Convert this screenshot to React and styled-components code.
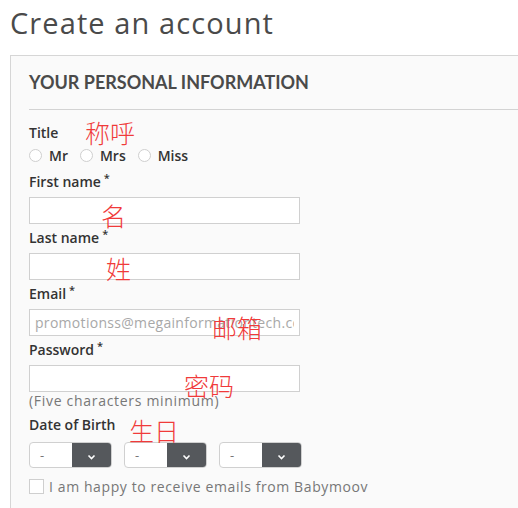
import React from "react";
import styled, { createGlobalStyle } from "styled-components";

const GlobalStyle = createGlobalStyle`
  html, body { margin: 0; padding: 0; background: #fff; overflow: hidden; }
  body { font-family: "Open Sans", "Noto Sans", sans-serif; color: #333; }
`;

const Page = styled.div`
  width: 518px;
  height: 508px;
  padding-left: 10px;
  box-sizing: border-box;
`;

const Heading = styled.h1`
  margin: 0;
  padding-top: 3px;
  height: 55px;
  box-sizing: border-box;
  font-family: "Open Sans", sans-serif;
  font-weight: 400;
  font-size: 29px;
  line-height: 40px;
  color: #4a4a4a;
  letter-spacing: 1.1px;
`;

const Panel = styled.section`
  position: relative;
  width: 560px;
  height: 470px;
  border: 1px solid #d6d6d6;
  background: #fafafa;
  padding: 0 0 0 18px;
  box-sizing: border-box;
`;

const PanelHead = styled.h2`
  margin: 0;
  padding: 16px 0 16px;
  border-bottom: 1px solid #d3d3d3;
  font-family: Lato, sans-serif;
  font-weight: 700;
  font-size: 18px;
  line-height: 21px;
  color: #4a4a4a;
`;

const Form = styled.div`
  display: flex;
  flex-direction: column;
  align-items: flex-start;
  padding-top: 13px;
`;

const Label = styled.label`
  margin-top: ${(p) => p.$top || 0}px;
  font-family: "Open Sans", sans-serif;
  font-weight: 600;
  font-size: 14px;
  line-height: 20px;
  color: #333;
  sup {
    font-size: 11px;
    margin-left: 3px;
    vertical-align: 5px;
    line-height: 0;
  }
`;

const Input = styled.input`
  width: 271px;
  height: 27px;
  box-sizing: border-box;
  margin: 5px 0 4px;
  border: 1px solid #d0d0d0;
  background: #fff;
  padding: 0 5px;
  font-family: "Open Sans", sans-serif;
  font-size: 14px;
  letter-spacing: 0.3px;
  color: #999;
  outline: none;
  &::placeholder { color: #a8a8a8; }
`;

const RadioRow = styled.div`
  display: flex;
  align-items: center;
  height: 20px;
  margin: 2px 0 7px;
`;

const RadioOption = styled.label`
  display: flex;
  align-items: center;
  gap: 7px;
  margin-right: ${(p) => p.$gap}px;
  font-family: "Open Sans", sans-serif;
  font-weight: 600;
  font-size: 14px;
  color: #333;
`;

const Circle = styled.span`
  width: 11px;
  height: 11px;
  border: 1px solid #cfcfcf;
  border-radius: 50%;
  background: #fff;
`;

const Hint = styled.div`
  margin-top: -5px;
  font-size: 14px;
  line-height: 20px;
  color: #777;
  letter-spacing: 0.7px;
`;

const Note = styled.span`
  position: absolute;
  left: ${(p) => p.$x}px;
  top: ${(p) => p.$y}px;
  font-family: "Noto Sans CJK SC", sans-serif;
  font-weight: 300;
  font-size: 25px;
  line-height: 1;
  color: #f03a3a;
  pointer-events: none;
  white-space: nowrap;
`;

const SelectRow = styled.div`
  display: flex;
  gap: 12px;
  margin-top: 7px;
`;

const Select = styled.div`
  display: flex;
  width: 83px;
  height: 26px;
  box-sizing: border-box;
  border: 1px solid #d0d0d0;
  border-radius: 4px;
  overflow: hidden;
  background: #fff;
`;

const SelectValue = styled.span`
  flex: 0 0 42px;
  padding-left: 10px;
  box-sizing: border-box;
  font-size: 13px;
  line-height: 24px;
  color: #777;
`;

const SelectArrow = styled.span`
  flex: 1;
  display: flex;
  align-items: center;
  justify-content: center;
  padding-top: 4px;
  background: #55585c;
`;

const CheckRow = styled.label`
  display: flex;
  align-items: center;
  gap: 5px;
  height: 20px;
  margin-top: 8px;
  font-size: 14px;
  color: #777;
  letter-spacing: 0.6px;
`;

const Box = styled.span`
  width: 13px;
  height: 13px;
  border: 1px solid #cfcfcf;
  background: #fff;
`;

function Chevron() {
  return (
    <svg width="9" height="6" viewBox="0 0 9 6">
      <polyline points="1.5,1.5 4.5,4.5 7.5,1.5" fill="none" stroke="#fff" strokeWidth="1.6" />
    </svg>
  );
}

function DateSelect() {
  return (
    <Select>
      <SelectValue>-</SelectValue>
      <SelectArrow>
        <Chevron />
      </SelectArrow>
    </Select>
  );
}

export default function App() {
  return (
    <Page>
      <GlobalStyle />
      <Heading>Create an account</Heading>
      <Panel>
        <PanelHead>YOUR PERSONAL INFORMATION</PanelHead>
        <Form>
          <Label>Title</Label>
          <RadioRow>
            <RadioOption $gap={12}><Circle />Mr</RadioOption>
            <RadioOption $gap={12}><Circle />Mrs</RadioOption>
            <RadioOption $gap={0}><Circle />Miss</RadioOption>
          </RadioRow>
          <Label>First name<sup>*</sup></Label>
          <Input type="text" />
          <Label>Last name<sup>*</sup></Label>
          <Input type="text" />
          <Label>Email<sup>*</sup></Label>
          <Input type="text" placeholder="promotionss@megainformationtech.com" />
          <Label>Password<sup>*</sup></Label>
          <Input type="password" />
          <Hint>(Five characters minimum)</Hint>
          <Label $top={4}>Date of Birth</Label>
          <SelectRow>
            <DateSelect />
            <DateSelect />
            <DateSelect />
          </SelectRow>
          <CheckRow>
            <Box />I am happy to receive emails from Babymoov
          </CheckRow>
        </Form>
        <Note $x={74} $y={64}>称呼</Note>
        <Note $x={90} $y={147}>名</Note>
        <Note $x={95} $y={200}>姓</Note>
        <Note $x={201} $y={259}>邮箱</Note>
        <Note $x={173} $y={317}>密码</Note>
        <Note $x={118} $y={362}>生日</Note>
      </Panel>
    </Page>
  );
}
